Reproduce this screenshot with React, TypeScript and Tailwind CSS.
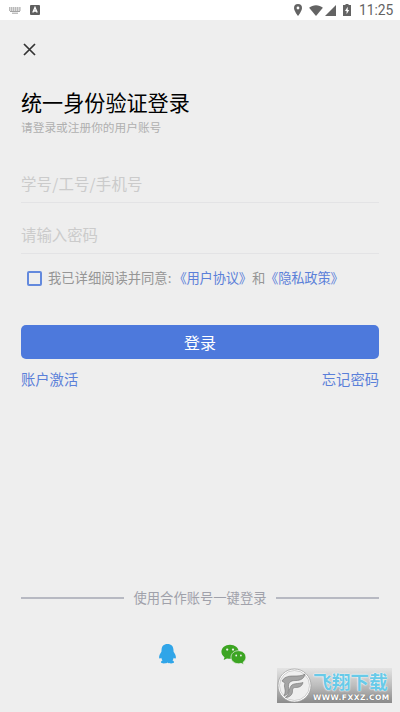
import { useState, type ReactNode } from "react"

function StatusBar() {
  return (
    <div className="flex h-5 items-center bg-white pl-[9px] pr-[7px] text-[#636363]">
      <svg viewBox="0 0 12 7" className="mt-px h-[7px] w-3" fill="none" stroke="#a3a3a3">
        <path d="M0 1h12M0 3h12" strokeWidth="1.3" strokeDasharray="1.4 .5" />
        <path d="M1 4.5h10M3 6.2h6" strokeWidth="1" />
      </svg>
      <svg viewBox="0 0 10 10" className="ml-[9px] h-2.5 w-2.5">
        <rect width="10" height="10" rx="1" fill="#5e5e5e" />
        <path d="M2.8 7.6 5 2.4l2.2 5.2M3.5 6h3" fill="none" stroke="#fff" strokeWidth="1.3" />
      </svg>
      <div className="ml-auto flex items-center">
        <svg viewBox="0 0 8 12" className="h-3 w-2" fill="currentColor">
          <path fillRule="evenodd" d="M4 0a4 4 0 0 0-4 4c0 3 4 8 4 8s4-5 4-8a4 4 0 0 0-4-4Zm0 2.6a1.4 1.4 0 1 1 0 2.8 1.4 1.4 0 0 1 0-2.8Z" />
        </svg>
        <svg viewBox="0 0 15 12" className="ml-[7px] h-[11px] w-[14px]" fill="currentColor">
          <path d="M0 3C4-.8 11-.8 15 3L7.5 12Z" />
        </svg>
        <svg viewBox="0 0 12 12" className="ml-0.5 h-[11px] w-[11px]" fill="currentColor">
          <path d="M12 0v12H0Z" />
        </svg>
        <svg viewBox="0 0 8 12" className="ml-[7px] h-3 w-2" fill="currentColor">
          <path fillRule="evenodd" d="M2.5 0h3v1H8v11H0V1h2.5ZM4.7 2.7 2 7h1.600v3.300L6.200 6H4.700Z" />
        </svg>
        <span className="ml-2 w-[34px] font-['Roboto'] text-[13.8px] leading-5 whitespace-nowrap">11:25</span>
      </div>
    </div>
  )
}

function Field({ type, placeholder }: { type: string; placeholder: string }) {
  return (
    <input
      type={type}
      placeholder={placeholder}
      className="block h-[51px] w-full border-b border-[#e3e3e5] bg-transparent pt-3 text-[15.4px] text-gray-700 outline-none placeholder:text-[#cbcbcb] [&[type=text]]:tracking-[0.2px]"
    />
  )
}

function Link({ children }: { children: ReactNode }) {
  return <a className="text-[#5b80d9]">{children}</a>
}

function QQIcon() {
  return (
    <svg viewBox="0 0 17 20" className="h-5 w-[17px]" fill="#30a5e8">
      <path d="M8.5 0C4.600 0 2.800 2.300 2.600 5.200L2.400 7.800C1.100 9.600.1 11.600.1 13.300c0 1 .4 1.400.9 1.300.5-.1.900-.4 1.300-.8.2 1 .6 1.900 1.200 2.600-.9.300-1.600.9-1.600 1.700 0 1.900 5.300 1.700 6.600.5 1.300 1.200 6.600 1.400 6.600-.5 0-.8-.7-1.400-1.600-1.700.6-.7 1-1.600 1.200-2.600.4.400.8.700 1.300.8.500.1.900-.3.900-1.300 0-1.700-1-3.700-2.300-5.500l-.2-2.600C14.200 2.300 12.400 0 8.500 0Z" />
    </svg>
  )
}

function WechatIcon() {
  return (
    <svg viewBox="0 0 25 21" className="h-[21px] w-[25px]" fill="#3ca522">
      <path d="M9 .7C4.2.7.4 3.8.4 7.8c0 2.2 1.2 4.1 3.1 5.400l-.8 2.700 3.300-1.500c1 .3 2 .4 3 .4C14 14.800 17.700 11.600 17.700 7.700 17.700 3.800 13.900.7 9 .7Z" />
      <path d="M17.500 6.700c-4.300 0-7.500 2.900-7.500 6.500s3.200 6.500 7.500 6.500c.9 0 1.700-.1 2.500-.4l2.800 1.300-.7-2.300c1.700-1.200 2.800-3 2.800-5.100 0-3.600-3.200-6.500-7.400-6.500Z" stroke="#eee" strokeWidth=".7" />
      <g fill="#eee">
        <circle cx="6.2" cy="5.6" r="1.15" />
        <circle cx="12" cy="5.6" r="1.15" />
        <circle cx="15.2" cy="11.5" r=".9" />
        <circle cx="19.9" cy="11.5" r=".9" />
      </g>
    </svg>
  )
}

function Watermark() {
  return (
    <div className="absolute right-2 bottom-[9px] flex h-[35px] w-[115px] bg-linear-to-b from-[#e4e4e4] via-[#bdbdbd] to-[#8b8b8b]">
      <svg viewBox="0 0 35 35" className="h-[35px] w-[35px] shrink-0">
        <circle cx="17.5" cy="17.5" r="16.5" fill="#fff" stroke="#999" strokeWidth=".7" />
        <circle cx="17.5" cy="17.5" r="15" fill="#efefef" stroke="#b5b5b5" strokeWidth=".6" />
        <g fill="#a5a5a5" stroke="#707070" strokeWidth=".6">
          <path d="M5 13c3-5 8-5 12-5 4 0 8 0 11-2-1 5-5 6.500-9 6.500-6 0-8 2-7.500 8 .3 4-1.500 7-4.500 7 3-5-1-9 1-12-1-1-2-2-3-2.500Z" />
          <path d="M14 18c2-3 7-2 12-3.500-1 4-4 5-7.500 5-3 0-3 2-3 4 0 3-3 6-7 6 4-3 3-8 5.500-11.500Z" />
        </g>
      </svg>
      <div className="flex w-[80px] flex-col">
        <span className="ml-px text-[18.7px] leading-[25px] font-bold whitespace-nowrap text-[#68cae8] [text-shadow:0_0_2px_white,0_0_1px_white]">飞翔下载</span>
        <span className="ml-px font-['DejaVu_Sans'] text-[7.5px] leading-[9px] font-bold tracking-[0.45px] whitespace-nowrap text-white [text-shadow:0_0_1px_#555]">WWW.FXXZ.COM</span>
      </div>
    </div>
  )
}

export default function App() {
  const [agreed, setAgreed] = useState(false)

  return (
    <div className="relative flex h-[712px] w-[400px] flex-col overflow-hidden bg-[#eeeeee] font-['Noto_Sans_CJK_SC',sans-serif]">
      <StatusBar />
      <main className="flex flex-1 flex-col px-[21px]">
        <button type="button" aria-label="关闭" className="mt-[23px] ml-0.5 h-[13px] w-[13px]">
          <svg viewBox="0 0 13 13" fill="none" stroke="#333" strokeWidth="1.7">
            <path d="m1 1 11 11M12 1 1 12" />
          </svg>
        </button>

        <h1 className="mt-[31px] text-[21.1px] leading-[30px] text-black">统一身份验证登录</h1>
        <p className="text-[11.7px] leading-5 text-[#b0b0b0]">请登录或注册你的用户账号</p>

        <div className="mt-[15px]">
          <Field type="text" placeholder="学号/工号/手机号" />
          <Field type="password" placeholder="请输入密码" />
        </div>

        <label className="mt-[14px] flex h-5 items-center pl-[6px] text-[13.3px] leading-5 whitespace-nowrap text-[#969696]">
          <input
            type="checkbox"
            checked={agreed}
            onChange={(e) => setAgreed(e.target.checked)}
            className="mr-[6px] h-[15px] w-[15px] appearance-none rounded-[2px] border-2 border-[#6389dd] checked:bg-[#4d79dc]"
          />
          <span>我已详细阅读并同意:</span>
          <span className="ml-0.5 tracking-[-0.2px]"><Link>《用户协议》</Link>和<Link>《隐私政策》</Link></span>
        </label>

        <button type="button" className="mt-[37px] h-[34px] rounded-[5px] bg-[#4d79dc] text-[16px] leading-[34px] text-white">登录</button>
        <div className="mt-[9px] flex justify-between text-[14.3px] leading-[22px]">
          <Link>账户激活</Link>
          <Link>忘记密码</Link>
        </div>

        <div className="mt-auto flex items-center justify-between text-[13.3px] leading-5 text-[#a0a1aa]">
          <span className="h-0.5 w-[103px] bg-[#b7b9c2]" />
          <span>使用合作账号一键登录</span>
          <span className="h-0.5 w-[103px] bg-[#b7b9c2]" />
        </div>
        <div className="mt-[35px] mb-[47px] flex h-[22px] items-center justify-center gap-[45px] pl-1">
          <QQIcon />
          <WechatIcon />
        </div>
      </main>
      <Watermark />
    </div>
  )
}
